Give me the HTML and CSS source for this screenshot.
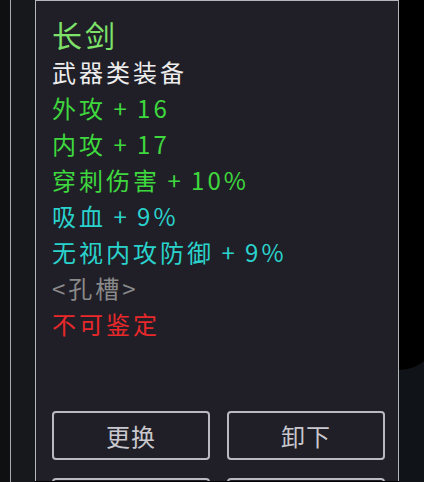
FILE: index.html
```html
<!DOCTYPE html>
<html lang="zh">
<head>
<meta charset="utf-8">
<link rel="stylesheet" href="styles.css">
</head>
<body>
<div class="screen">
  <div class="edge-a"></div>
  <div class="edge-b"></div>
  <div class="panel">
    <div class="title">长剑</div>
    <div class="line white">武器类装备</div>
    <div class="line green">外攻 + 16</div>
    <div class="line green">内攻 + 17</div>
    <div class="line green">穿刺伤害 + 10%</div>
    <div class="line cyan">吸血 + 9%</div>
    <div class="line cyan">无视内攻防御 + 9%</div>
    <div class="line gray">&lt;孔槽&gt;</div>
    <div class="line red">不可鉴定</div>
    <div class="buttons first">
      <div class="btn">更换</div>
      <div class="btn">卸下</div>
    </div>
    <div class="buttons">
      <div class="btn"></div>
      <div class="btn"></div>
    </div>
  </div>
  <div class="side">
    <div class="blob"></div>
  </div>
</div>
</body>
</html>
```
FILE: styles.css
```css
html, body {
  margin: 0;
  padding: 0;
  background: #000;
}
body {
  width: 424px;
  height: 482px;
  overflow: hidden;
  font-family: "Noto Sans CJK SC", "Noto Sans", sans-serif;
}
.screen {
  display: flex;
  height: 482px;
  overflow: hidden;
}
.edge-a {
  width: 10px;
  background: #0f1012;
}
.edge-b {
  width: 24px;
  background: #16181b;
  border-left: 1px solid #a9a9b0;
}
.panel {
  width: 364px;
  height: 481px;
  overflow: hidden;
  background: #201f27;
  border-left: 1px solid #b5b5bc;
  border-right: 1px solid #b5b5bc;
  border-top: 1px solid #b5b5bc;
  padding: 13px 0 0 0;
  display: flex;
  flex-direction: column;
  box-sizing: border-box;
}
.title {
  padding-left: 16px;
  font-size: 30px;
  line-height: 40px;
  letter-spacing: 3px;
  color: #7ee26a;
}
.line {
  padding-left: 16px;
  font-size: 24px;
  line-height: 36px;
  letter-spacing: 3px;
  word-spacing: -1px;
  white-space: nowrap;
}
.white { color: #ededed; }
.green { color: #3ed83e; }
.cyan { color: #2ad2cc; }
.gray { color: #8a8a8a; }
.red { color: #e8282a; }
.buttons {
  display: flex;
  gap: 17px;
  padding-left: 16px;
  margin-top: 18px;
  flex: none;
}
.buttons.first {
  margin-top: 69px;
}
.btn {
  width: 154px;
  height: 45px;
  border: 2px solid #b9b9c0;
  border-radius: 4px;
  display: flex;
  align-items: center;
  justify-content: center;
  color: #c8c8ce;
  font-size: 24px;
  letter-spacing: 1px;
  flex: none;
}
.side {
  flex: 1;
  background: #101418;
  position: relative;
  overflow: hidden;
}
.blob {
  position: absolute;
  left: -20px;
  top: -40px;
  width: 60px;
  height: 410px;
  background: #000;
  border-radius: 0 0 40px 20px;
}
```
